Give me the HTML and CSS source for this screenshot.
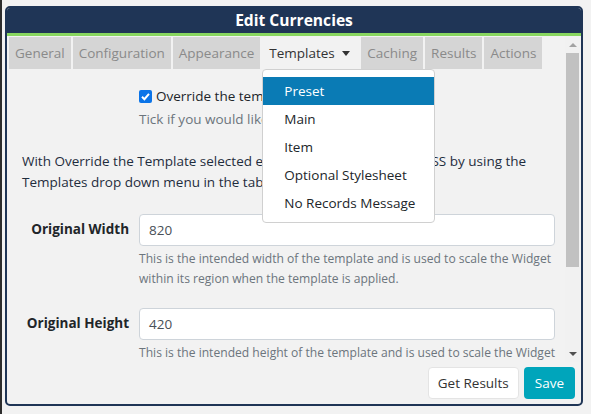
FILE: index.html
```html
<!DOCTYPE html>
<html>
<head>
<meta charset="utf-8">
<link rel="stylesheet" href="styles.css">
</head>
<body>
<div class="edge"></div>
<div class="dialog">
  <div class="header">Edit Currencies</div>
  <div class="body">
    <div class="scroller">
      <div class="tabs">
        <div class="tab">General</div>
        <div class="tab">Configuration</div>
        <div class="tab">Appearance</div>
        <div class="tab active">Templates <span class="caret"></span>
          <div class="menu">
            <div class="item sel">Preset</div>
            <div class="item">Main</div>
            <div class="item">Item</div>
            <div class="item">Optional Stylesheet</div>
            <div class="item">No Records Message</div>
          </div>
        </div>
        <div class="tab">Caching</div>
        <div class="tab">Results</div>
        <div class="tab">Actions</div>
      </div>
      <div class="content">
        <div class="row check-row">
          <div class="label"></div>
          <div class="field">
            <label class="check"><span class="box"><svg viewBox="0 0 13 13" width="13" height="13"><path d="M3 6.8 L5.4 9.2 L10 3.8" fill="none" stroke="#fff" stroke-width="2"/></svg></span>Override the template</label>
            <div class="help">Tick if you would like to override the template</div>
          </div>
        </div>
        <p class="para">With Override the Template selected enter your own HTML and CSS by using the Templates drop down menu in the tab <span class="orange">above</span>.</p>
        <div class="row">
          <div class="label">Original Width</div>
          <div class="field">
            <div class="input">820</div>
            <div class="help">This is the intended width of the template and is used to scale the Widget within its region when the template is applied.</div>
          </div>
        </div>
        <div class="row">
          <div class="label">Original Height</div>
          <div class="field">
            <div class="input">420</div>
            <div class="help">This is the intended height of the template and is used to scale the Widget within its region when the template is applied.</div>
          </div>
        </div>
      </div>
    </div>
    <div class="scrollbar">
      <div class="arrow up"></div>
      <div class="track"><div class="thumb"></div></div>
      <div class="arrow down"></div>
    </div>
  </div>
  <div class="footer">
    <div class="btn light">Get Results</div>
    <div class="btn save">Save</div>
  </div>
</div>
</body>
</html>
```
FILE: styles.css
```css
html, body { margin: 0; padding: 0; }
body {
  background: #f2f2f2;
  font-family: "Open Sans", "Noto Sans", sans-serif;
  font-size: 13.5px;
  color: #212529;
  display: flex;
  height: 414px;
  overflow: hidden;
}
.edge { width: 2px; background: #2d2d2d; height: 414px; flex: none; }
.dialog {
  margin: 6px 0 0 3px;
  width: 574px;
  height: 396px;
  border: 2px solid #1f3556;
  border-radius: 5px;
  background: #f2f2f2;
  display: flex;
  flex-direction: column;
  overflow: hidden;
}
.header {
  background: #1f3556;
  color: #fff;
  font-weight: 700;
  font-size: 15.6px;
  text-align: center;
  height: 25px;
  line-height: 25px;
  border-bottom: 3px solid #88d65f;
  flex: none;
}
.body { display: flex; height: 326px; flex: none; }
.scroller { flex: 1; overflow: hidden; position: relative; }
.tabs { display: flex; gap: 2px; padding: 1px 0 0 2px; height: 32px; }
.tab {
  background: #d5d5d5;
  color: #8a8a8a;
  padding: 0 6px;
  line-height: 32px;
  position: relative;
}
.tab.active { background: #f2f2f2; color: #333; padding: 0 9px 0 7px; }
.caret {
  display: inline-block;
  width: 0; height: 0;
  border-left: 4px solid transparent;
  border-right: 4px solid transparent;
  border-top: 5px solid #333;
  vertical-align: 2px;
  margin-left: 4px;
}
.menu {
  position: absolute;
  left: 0; top: 32px;
  width: 171px;
  background: #fff;
  border: 1px solid #d0d0d0;
  border-radius: 4px;
  padding: 7px 0 5px;
  z-index: 5;
}
.item { height: 28px; line-height: 28px; padding-left: 21px; color: #212529; }
.item.sel { background: #0a7bb5; color: #fff; }
.content { padding: 16px 10px 0 15px; }
.row { display: flex; gap: 10px; }
.label {
  width: 107px;
  flex: none;
  text-align: right;
  font-weight: 700;
  padding-top: 6px;
}
.field { flex: 1; min-width: 0; }
.check { display: flex; align-items: center; gap: 4px; height: 22px; color: #212529; }
.box {
  width: 13px; height: 13px;
  background: #0b74e8;
  border-radius: 2px;
  display: inline-block;
}
.box svg { display: block; }
.help { color: #6c757d; font-size: 12.1px; line-height: 19.5px; margin-top: 3px; }
.check-row .help { font-size: 13.5px; margin-top: 2px; line-height: 20px; }
.para { margin: 22px 0 21px; line-height: 21px; color: #1f2d3d; }
.orange { color: #e0892e; }
.input {
  height: 30px;
  border: 1px solid #ced4da;
  border-radius: 4px;
  background: #fff;
  line-height: 30px;
  padding-left: 9px;
  color: #495057;
}
.row + .row { margin-top: 20px; }
.scrollbar {
  width: 15px;
  background: #f1f1f1;
  margin-right: 1px;
  display: flex;
  flex-direction: column;
  flex: none;
}
.arrow { height: 17px; display: flex; align-items: center; justify-content: center; }
.arrow.up::before {
  content: ""; border-left: 4px solid transparent; border-right: 4px solid transparent;
  border-bottom: 4px solid #a3a3a3;
}
.arrow.down::before {
  content: ""; border-left: 4px solid transparent; border-right: 4px solid transparent;
  border-top: 4px solid #505050;
}
.track { flex: 1; padding: 0 1px; }
.thumb { height: 214px; background: #c1c1c1; }
.footer {
  display: flex;
  justify-content: flex-end;
  gap: 5px;
  padding: 5px 6px 0 0;
}
.btn {
  height: 32px;
  line-height: 32px;
  border-radius: 4px;
  padding: 0 11px;
}
.btn.light { background: #fff; border: 1px solid #e4e4e4; height: 30px; line-height: 30px; color: #333; padding: 0 9px; }
.btn.save { background: #00a5bb; color: #fff; }
```
